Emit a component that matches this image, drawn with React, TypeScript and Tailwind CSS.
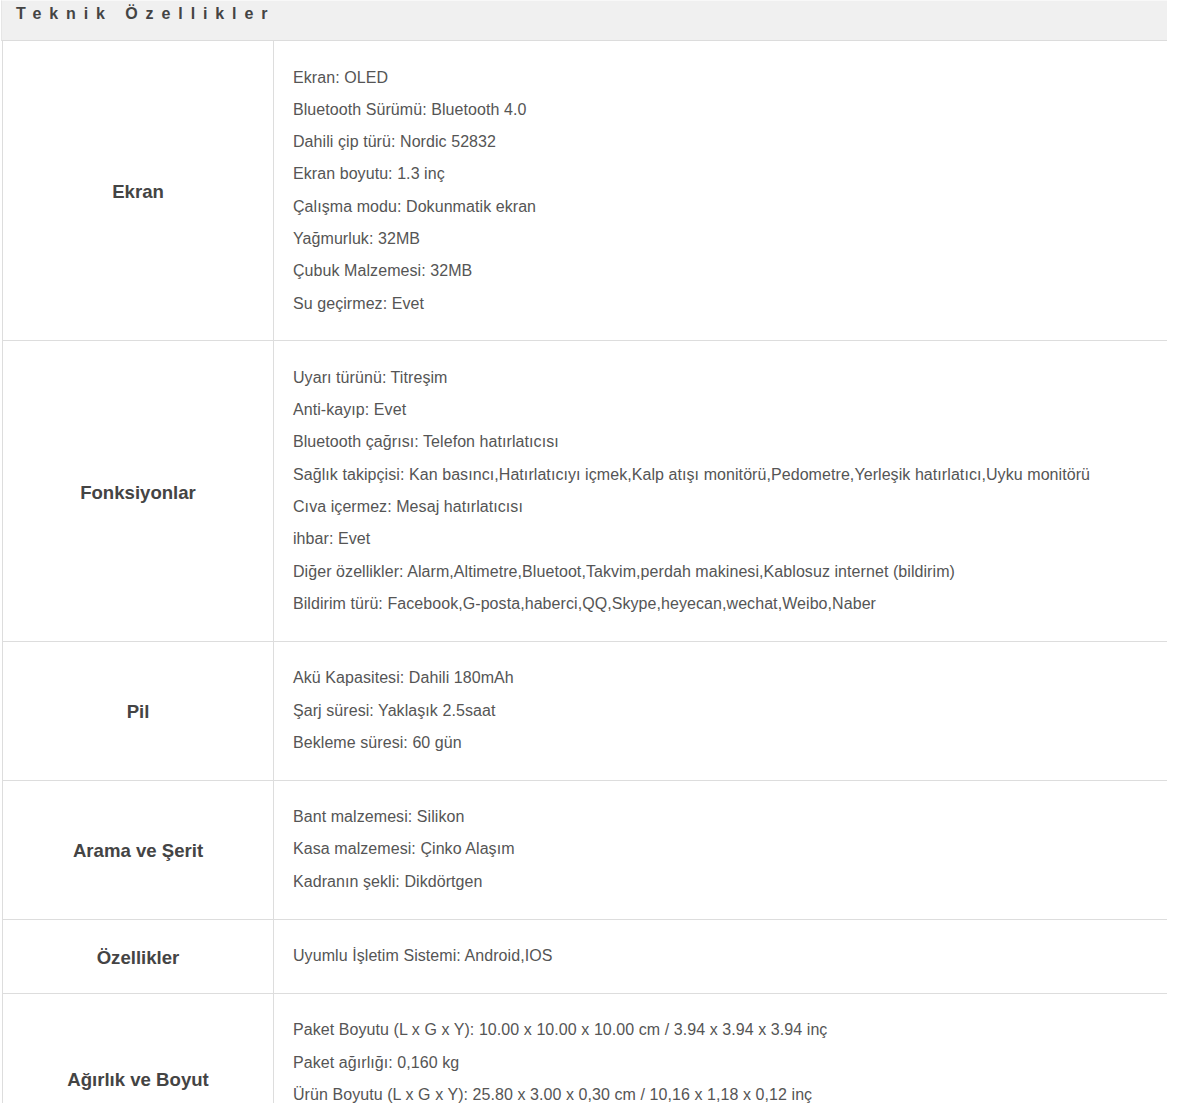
import React from "react";

const rows: { label: string; items: string[] }[] = [
  {
    label: "Ekran",
    items: [
      "Ekran: OLED",
      "Bluetooth Sürümü: Bluetooth 4.0",
      "Dahili çip türü: Nordic 52832",
      "Ekran boyutu: 1.3 inç",
      "Çalışma modu: Dokunmatik ekran",
      "Yağmurluk: 32MB",
      "Çubuk Malzemesi: 32MB",
      "Su geçirmez: Evet",
    ],
  },
  {
    label: "Fonksiyonlar",
    items: [
      "Uyarı türünü: Titreşim",
      "Anti-kayıp: Evet",
      "Bluetooth çağrısı: Telefon hatırlatıcısı",
      "Sağlık takipçisi: Kan basıncı,Hatırlatıcıyı içmek,Kalp atışı monitörü,Pedometre,Yerleşik hatırlatıcı,Uyku monitörü",
      "Cıva içermez: Mesaj hatırlatıcısı",
      "ihbar: Evet",
      "Diğer özellikler: Alarm,Altimetre,Bluetoot,Takvim,perdah makinesi,Kablosuz internet (bildirim)",
      "Bildirim türü: Facebook,G-posta,haberci,QQ,Skype,heyecan,wechat,Weibo,Naber",
    ],
  },
  {
    label: "Pil",
    items: [
      "Akü Kapasitesi: Dahili 180mAh",
      "Şarj süresi: Yaklaşık 2.5saat",
      "Bekleme süresi: 60 gün",
    ],
  },
  {
    label: "Arama ve Şerit",
    items: [
      "Bant malzemesi: Silikon",
      "Kasa malzemesi: Çinko Alaşım",
      "Kadranın şekli: Dikdörtgen",
    ],
  },
  {
    label: "Özellikler",
    items: ["Uyumlu İşletim Sistemi: Android,IOS"],
  },
  {
    label: "Ağırlık ve Boyut",
    items: [
      "Paket Boyutu (L x G x Y): 10.00 x 10.00 x 10.00 cm / 3.94 x 3.94 x 3.94 inç",
      "Paket ağırlığı: 0,160 kg",
      "Ürün Boyutu (L x G x Y): 25.80 x 3.00 x 0,30 cm / 10,16 x 1,18 x 0,12 inç",
      "Ürün ağırlığı: 0,045 kg",
    ],
  },
];

export default function App() {
  return (
    <div
      className="bg-white min-h-[1103px] pl-[1px]"
      style={{ fontFamily: '"Liberation Sans", Arial, sans-serif' }}
    >
      <div className="w-[1166px]">
        <div className="h-[41px] bg-[#f0f0f0] border-t border-t-[#f8f8f8] border-l border-l-[#e6e6e6] border-b border-b-[#dcdcdc] pl-[14px] pt-[1px]">
          <span className="text-[16px] font-bold text-[#444] tracking-[7.9px] leading-[18px]">
            Teknik Özellikler
          </span>
        </div>
        {rows.map((r) => (
          <div
            key={r.label}
            className="flex border-l border-b border-[#dddddd] ml-[1px]"
          >
            <div className="w-[271px] shrink-0 border-r border-[#dddddd] flex items-center justify-center pt-[3px] text-[18.6px] font-bold text-[#444]">
              {r.label}
            </div>
            <div className="flex-1 pl-[19px] py-[20.5px] text-[16px] leading-[32.3px] tracking-[0.07px] text-[#555]">
              {r.items.map((it) => (
                <div key={it} className="whitespace-nowrap">
                  {it}
                </div>
              ))}
            </div>
          </div>
        ))}
      </div>
    </div>
  );
}
